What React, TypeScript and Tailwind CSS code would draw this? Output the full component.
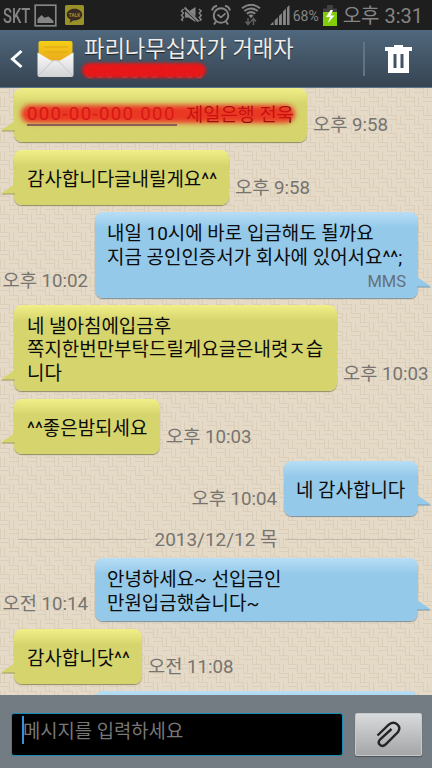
import React from 'react';
import clsx from 'clsx';

interface Message {
  id: number;
  side: 'in' | 'out';
  lines: string[];
  time: string;
  tag?: string;
  // full class names so Tailwind can pick them up
  box: string;
  row: string;
  masked?: boolean;
}

const FONT = "font-[Roboto,'Noto_Sans_CJK_KR',sans-serif]";

const MESSAGES: Message[] = [
  { id: 1, side: 'in', lines: ['000-00-000 000'], time: '오후 9:58', box: 'w-[293px] h-[54px]', row: '', masked: true },
  { id: 2, side: 'in', lines: ['감사합니다글내릴게요^^'], time: '오후 9:58', box: 'w-[215px] h-[55px]', row: 'mt-2' },
  {
    id: 3,
    side: 'out',
    lines: ['내일 10시에 바로 입금해도 될까요', '지금 공인인증서가 회사에 있어서요^^;'],
    time: '오후 10:02',
    tag: 'MMS',
    box: 'w-[323px] h-[86px]',
    row: 'mt-[7px]',
  },
  {
    id: 4,
    side: 'in',
    lines: ['네 낼아침에입금후', '쪽지한번만부탁드릴게요글은내렷ㅈ습', '니다'],
    time: '오후 10:03',
    box: 'w-[323px] h-[86px]',
    row: 'mt-[7px]',
  },
  { id: 5, side: 'in', lines: ['^^좋은밤되세요'], time: '오후 10:03', box: 'w-[146px] h-[55px]', row: 'mt-2' },
  { id: 6, side: 'out', lines: ['네 감사합니다'], time: '오후 10:04', box: 'w-[134px] h-[55px]', row: 'mt-[7px]' },
];

const MESSAGES_TODAY: Message[] = [
  { id: 7, side: 'out', lines: ['안녕하세요~ 선입금인', '만원입금했습니다~'], time: '오전 10:14', box: 'w-[323px] h-[63px]', row: '' },
  { id: 8, side: 'in', lines: ['감사합니닷^^'], time: '오전 11:08', box: 'w-[128px] h-[55px]', row: 'mt-2' },
  { id: 9, side: 'out', lines: [''], time: '', box: 'w-[323px] h-[55px]', row: 'mt-[7px]' },
];

const StatusBar = () => (
  <div className="flex h-[30px] shrink-0 items-center bg-[#1e1e1e] text-[#858585]">
    <span className="ml-[3px] w-[27px] origin-left scale-x-[.74] pt-[2px] text-[20px] font-medium leading-[30px]">SKT</span>
    {/* gallery */}
    <svg className="ml-[4px]" width="23" height="23" viewBox="0 0 23 23">
      <rect x="1.2" y="1.2" width="20.6" height="20.6" fill="none" stroke="#858585" strokeWidth="1.7" />
      <path d="M3.5 19v-4l4-4 3 2.8 4-1.3 5 4.5v2z" fill="#858585" />
    </svg>
    {/* talk */}
    <svg className="ml-[8px]" width="19" height="20" viewBox="0 0 19 20">
      <rect width="19" height="20" rx="1.5" fill="#9a9128" />
      <path d="M9.5 3.8c-4.3 0-7.7 2.5-7.7 5.8 0 2.2 1.4 4 3.6 5l-.6 3.2 3.4-2.4c4.9.5 9-1.9 9-5.8 0-3.3-3.4-5.8-7.7-5.8z" fill="#3a2b24" />
      <text x="9.5" y="11.6" textAnchor="middle" fontSize="4.8" fontWeight="bold" fill="#9a9128">TALK</text>
    </svg>
    <div className="flex-1" />
    {/* vibrate / mute */}
    <svg width="23" height="18" viewBox="0 0 23 18" fill="none" stroke="#858585" strokeWidth="1.4">
      <path d="M5 5.5h3.5L15.5 1v15L8.5 11.5H5z" fill="#858585" stroke="none" />
      <path d="M4 2l14.5 13.5" stroke="#1e1e1e" strokeWidth="3" />
      <path d="M4.5 1.5L18.5 15.5" strokeWidth="2" />
      <path d="M3.5 3L1.5 5l2 2-2 2.500 2 2-2 2 1.500 1.500M19 3l2.200 2-2 2 2 2.500-2 2 2 2-1.700 1.500" />
    </svg>
    {/* alarm */}
    <svg className="ml-[8px]" width="20" height="22" viewBox="0 0 20 22" fill="none" stroke="#858585" strokeWidth="2">
      <circle cx="10" cy="11.5" r="7.3" />
      <path d="M1 6.5Q2 2.5 6 1.7M19 6.5Q18 2.5 14 1.7M5 17.5L3 20.5M15 17.5l2 3" />
      <path d="M6.5 10.5l3.5 2.8 4.5-4" strokeWidth="1.7" />
    </svg>
    {/* wifi */}
    <svg className="ml-[10px]" width="20" height="22" viewBox="0 0 20 22" fill="none" stroke="#858585">
      <path d="M1 4.2Q10-2.5 19 4.2M3.3 7Q10 2 16.7 7M5.8 9.7Q10 6.5 14.2 9.7" strokeWidth="2" />
      <path d="M7.5 11.5Q10 9.5 12.5 11.5L10 14.2z" fill="#858585" stroke="none" />
      <path d="M7 14v6M4.5 17.5L7 20.5l2.5-3M12.5 21v-6M10 17.5l2.5-3 2.5 3" stroke="#5f5f5f" strokeWidth="1.5" />
    </svg>
    {/* signal */}
    <svg className="ml-[9px]" width="20" height="21" viewBox="0 0 20 21" fill="#858585">
      <path d="M0 20l3.5-3.5V20zM4.7 20v-4.7l3.1-3.1V20zM9 20V11l2.9-2.9V20zM13 20V6.5l2.9-2.9V20zM17 20V2.5L19.5 0v20z" />
    </svg>
    <span className="ml-[3px] w-[28px] whitespace-nowrap pt-px text-[14px] leading-[30px]">68%</span>
    <svg className="ml-[2px]" width="14" height="21" viewBox="0 0 14 21">
      <path d="M0 3.5h4V0h6v3.5h4V21H0z" fill="#414141" />
      <rect y="7" width="14" height="14" fill="#83cc0a" />
      <path d="M7.5 5L3 12h4l-2.2 6L11.5 10.5h-4L10 5z" fill="#fff" />
    </svg>
    <span className="ml-[6px] mr-[9px] whitespace-nowrap pt-px text-[20px] leading-[30px]">오후 3:31</span>
  </div>
);

const Header = () => (
  <div className="flex h-[58px] shrink-0 items-center border-b border-[#597488] bg-linear-to-b from-[#50687d] to-[#364452]">
    <svg className="ml-[10px]" width="13" height="20" viewBox="0 0 13 20" fill="none" stroke="#fff" strokeWidth="3">
      <path d="M11.5 2L2.5 10l9 8" />
    </svg>
    <svg className="ml-[14px]" width="37" height="38" viewBox="0 0 37 38">
      <defs>
        <linearGradient id="paper" x1="0" y1="0" x2="0" y2="1">
          <stop offset="0" stopColor="#f3cf16" />
          <stop offset="1" stopColor="#eda71f" />
        </linearGradient>
        <linearGradient id="envelope" x1="0" y1="0" x2="0" y2="1">
          <stop offset="0" stopColor="#fbfbfb" />
          <stop offset="1" stopColor="#d2d3d5" />
        </linearGradient>
      </defs>
      <path d="M1.5 3q0-2 2-2h30q2 0 2 2v15l-13 4h-8l-13-5z" fill="url(#paper)" />
      <path d="M7 7h24M7 12h24" stroke="#dca812" strokeWidth="1" />
      <path d="M.5 12.5L14 20.5h9l13.5-8V35q0 2-2 2h-32q-2 0-2-2z" fill="url(#envelope)" />
      <path d="M1 36l14-14.5q3.5-2.5 7 0L36 36" fill="none" stroke="#c4c6c9" strokeWidth="1" />
    </svg>
    <div className="ml-[10px] flex flex-1 flex-col">
      <span className="whitespace-nowrap text-[22.2px] leading-[28px] text-[#eee] [text-shadow:0_1px_1px_#222]">파리나무십자가 거래자</span>
      <div className="relative h-[20px] w-[126px]">
        <span className="ml-[1px] block whitespace-nowrap text-[16px] leading-[19px] tracking-[.9px] text-[#7d7478]">000-0000-0000</span>
        <div className="absolute left-[-2px] top-0 h-[15px] w-[124px] rounded-full bg-[#ef1414]/95 blur-[1.5px]" />
      </div>
    </div>
    <div className="h-[34px] w-[2px] bg-[#607486]" />
    <svg className="ml-[20px] mr-[20px]" width="27" height="28" viewBox="0 0 27 28" fill="#fff">
      <path fillRule="evenodd" d="M9 0h9v2h9v4h-3v22H3V6H0V2h9zM8.5 9v14h3V9zM15.5 9v14h3V9z" />
    </svg>
  </div>
);

const Tail = ({ side }: { side: Message['side'] }) => (
  <svg
    className={clsx('absolute bottom-[10px]', side === 'in' ? 'left-[-14px]' : 'right-[-14px] -scale-x-100')}
    width="15"
    height="12"
    viewBox="0 0 15 12"
  >
    <path d="M15 2v9.5H1z" fill={side === 'in' ? '#9e9b69' : '#7b99ab'} />
    <path d="M15 1v9.5H1z" fill={side === 'in' ? '#d6d46c' : '#94c9ea'} />
  </svg>
);

const Bubble = ({ msg }: { msg: Message }) => {
  const incoming = msg.side === 'in';
  return (
    <div className={clsx('flex shrink-0 items-end', incoming ? 'pl-[14px]' : 'flex-row-reverse pr-[14px]', msg.row)}>
      <div
        className={clsx(
          'relative flex shrink-0 flex-col justify-center rounded-[8px] pr-3',
          incoming
            ? 'bg-linear-to-b from-[#f1ef88] to-[#d6d46c] to-[16px] pl-[13px] shadow-[0_1px_1px_#8f8b62]'
            : 'bg-linear-to-b from-[#b8def5] to-[#94c9ea] to-[16px] pl-3 shadow-[0_1px_1px_#7d8f98]',
          !msg.masked && 'pt-1',
          msg.box,
        )}
      >
        {msg.masked ? (
          <div className="relative flex h-[24px] items-center whitespace-nowrap text-[18.7px] leading-[24px]">
            <span className="w-[150px] border-b-2 border-[#74706a] leading-[20px] tracking-[1.3px] text-[#8b2a2a]">{msg.lines[0]}</span>
            <span className="ml-[9px] text-[#3a0a0a]">제일은행 전욱</span>
            <div className="absolute left-[-6px] top-[2px] h-[18px] w-[274px] rounded-full bg-[#ef1212]/80 blur-[2.5px]" />
          </div>
        ) : (
          msg.lines.map((line) => (
            <p key={line} className="whitespace-nowrap text-[18.95px] leading-[23.3px] text-[#0b0b0b]">
              {line}
            </p>
          ))
        )}
        {msg.tag && <span className="mt-[3px] self-end text-[16.5px] leading-[20px] text-[#667078]">{msg.tag}</span>}
        <Tail side={msg.side} />
      </div>
      <span className={clsx('whitespace-nowrap pb-[5px] text-[18.7px] leading-[24px] text-[#777470]', incoming ? 'ml-[6px]' : 'mr-[7px]')}>
        {msg.time}
      </span>
    </div>
  );
};

// Basket weave behind the conversation
const Weave = () => (
  <svg className="absolute inset-0 -z-10" width="432" height="607">
    <defs>
      <pattern id="weave" width="18" height="18" patternUnits="userSpaceOnUse">
        <rect width="18" height="18" fill="#e4dac7" />
        <path
          d="M0 .5h9M0 4.5h9M9 9.5h9M9 13.5h9M9.5 0v9M13.5 0v9M.5 9v9M4.5 9v9"
          stroke="#dccfba"
          strokeWidth="1"
        />
      </pattern>
    </defs>
    <rect width="432" height="607" fill="url(#weave)" />
  </svg>
);

const DateDivider = () => (
  <div className="flex h-[42px] shrink-0 items-center px-[18px] pt-[5px]">
    <div className="h-px w-[129px] bg-[#c5bbab]" />
    <span className="flex-1 whitespace-nowrap text-center text-[18.95px] leading-[24px] text-[#777470]">2013/12/12 목</span>
    <div className="h-px w-[129px] bg-[#c5bbab]" />
  </div>
);

const Composer = () => (
  <div className="flex h-[73px] shrink-0 bg-[#737b83] pl-[11px] pt-[18px]">
    <div className="flex h-[43px] w-[332px] items-start rounded-[3px] border border-[#178bb5] bg-black pl-[10px] pt-[2px]">
      <div className="h-[28px] w-[2px] bg-[#3d8fd6]" />
      <span className="-ml-[1px] whitespace-nowrap pt-[2px] text-[18.8px] leading-[29px] text-[#777]">메시지를 입력하세요</span>
    </div>
    <button className="ml-[12px] flex h-[43px] w-[67px] items-center justify-center rounded-[2px] border border-[#c7c8ca] bg-linear-to-b from-[#d9dadc] to-[#a5a6a8] shadow-[0_1px_1px_#4d5257]">
      <svg width="25" height="27" viewBox="0 0 25 27" fill="none" stroke="#252525" strokeWidth="2.4">
        <path d="M1.5 14.5L13 3.5C19-1 26 5 22 11L9.5 23.5C5.5 27 .5 22.5 4 18.5L15.5 8" />
      </svg>
    </button>
  </div>
);

const App: React.FC = () => {
  return (
    <div className={clsx('flex h-[768px] w-[432px] flex-col overflow-hidden', FONT)}>
      <StatusBar />
      <Header />
      <div className="relative isolate flex h-[607px] shrink-0 flex-col overflow-hidden">
        <Weave />
        {MESSAGES.map((msg) => (
          <Bubble key={msg.id} msg={msg} />
        ))}
        <DateDivider />
        {MESSAGES_TODAY.map((msg) => (
          <Bubble key={msg.id} msg={msg} />
        ))}
      </div>
      <Composer />
    </div>
  );
};

export default App;
